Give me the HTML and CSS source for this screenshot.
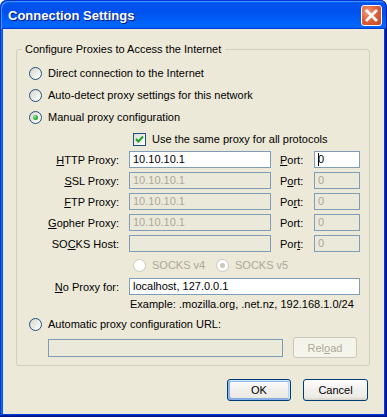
FILE: index.html
```html
<!DOCTYPE html>
<html>
<head>
<meta charset="utf-8">
<link rel="stylesheet" href="styles.css">
</head>
<body>
<div class="window">
  <div class="titlebar">
    <span class="title">Connection Settings</span>
    <span class="close"><svg width="19" height="19" viewBox="0 0 19 19"><path d="M5 5 L14 14 M14 5 L5 14" stroke="#fff" stroke-width="2.8" stroke-linecap="square"/></svg></span>
  </div>
  <div class="frame">
    <fieldset class="group">
      <legend>Configure Proxies to Access the Internet</legend>
      <div class="row radio-row"><span class="radio"></span>Direct connection to the Internet</div>
      <div class="row radio-row"><span class="radio"></span>Auto-detect proxy settings for this network</div>
      <div class="row radio-row"><span class="radio checked"></span>Manual proxy configuration</div>
      <div class="row check-row"><span class="check"><svg width="11" height="11" viewBox="0 0 11 11"><path d="M2 5 L4.3 7.5 L9 2.5" fill="none" stroke="#21a121" stroke-width="2"/></svg></span>Use the same proxy for all protocols</div>
      <div class="proxy-grid">
        <span class="lbl"><u>H</u>TTP Proxy:</span><span class="tb">10.10.10.1</span><span class="plbl"><u>P</u>ort:</span><span class="tb"><span class="caret"></span>0</span>
        <span class="lbl"><u>S</u>SL Proxy:</span><span class="tb off">10.10.10.1</span><span class="plbl">P<u>o</u>rt:</span><span class="tb off">0</span>
        <span class="lbl"><u>F</u>TP Proxy:</span><span class="tb off">10.10.10.1</span><span class="plbl">Po<u>r</u>t:</span><span class="tb off">0</span>
        <span class="lbl"><u>G</u>opher Proxy:</span><span class="tb off">10.10.10.1</span><span class="plbl">Port:</span><span class="tb off">0</span>
        <span class="lbl">SO<u>C</u>KS Host:</span><span class="tb off"></span><span class="plbl">Por<u>t</u>:</span><span class="tb off">0</span>
      </div>
      <div class="row socks-row">
        <span class="opt"><span class="radio dis"></span>SOCKS v4</span>
        <span class="opt"><span class="radio dis checked"></span>SOCKS v5</span>
      </div>
      <div class="noproxy-row">
        <span class="lbl"><u>N</u>o Proxy for:</span><span class="tb">localhost, 127.0.0.1</span>
      </div>
      <div class="example">Example: .mozilla.org, .net.nz, 192.168.1.0/24</div>
      <div class="row radio-row"><span class="radio"></span>Automatic proxy configuration URL:</div>
      <div class="url-row">
        <span class="tb off url"></span>
        <span class="btn disabled reload">Rel<u>o</u>ad</span>
      </div>
    </fieldset>
    <div class="buttons">
      <span class="btn default ok">OK</span>
      <span class="btn cancel">Cancel</span>
    </div>
  </div>
</div>
</body>
</html>
```
FILE: styles.css
```css
html, body {
  margin: 0;
  padding: 0;
  background: #ffffff;
}
body {
  font-family: "Liberation Sans", Arial, sans-serif;
  font-size: 11px;
  color: #000;
}
.window {
  width: 387px;
  height: 417px;
  display: flex;
  flex-direction: column;
}
.titlebar {
  box-sizing: border-box;
  height: 29px;
  flex: none;
  display: flex;
  justify-content: space-between;
  align-items: flex-start;
  padding: 5px 5px 0 8px;
  border-radius: 7px 7px 0 0;
  background: linear-gradient(180deg, #0997ff 0, #0053ee 10%, #0050ee 40%, #0066ff 86%, #0066ff 92%, #005bff 95%, #003dd7 97%, #003dd7 100%);
  box-shadow: inset 1px 1px #0831d9, inset -1px 0 #001ea0, inset 2px 2px #3d95ff;
}
.title {
  font-family: "Liberation Sans", Arial, sans-serif;
  font-weight: bold;
  font-size: 13px;
  line-height: 21px;
  color: #fff;
  text-shadow: 1px 1px #0a1883;
}
.close {
  box-sizing: border-box;
  width: 21px;
  height: 21px;
  border: 1px solid #fff;
  border-radius: 3px;
  background: radial-gradient(circle at 30% 30%, #f19a7c 0, #e1613c 45%, #c9431f 100%);
  display: flex;
  align-items: center;
  justify-content: center;
}
.close svg { display: block; }
.frame {
  flex: 1;
  background: #ece9d8;
  padding: 0 3px 3px;
  box-shadow: inset -1px -1px #00138c, inset 1px 0 #0831d9, inset -2px -2px #001ea0, inset 2px 0 #166aee, inset -3px -3px #003bda, inset 3px 0 #0855dd;
  display: flex;
  flex-direction: column;
}
.group {
  margin: 14px 14px 0 13px;
  padding: 6px 0 7px;
  border: 1px solid #d0d0bf;
  border-radius: 3px;
  min-width: 0;
}
.group legend {
  margin-left: 5px;
  padding: 0 4px 0 3px;
  line-height: 13px;
}
.row {
  display: flex;
  align-items: center;
  height: 22px;
}
.radio-row { padding-left: 12px; }
.radio {
  box-sizing: border-box;
  width: 13px;
  height: 13px;
  flex: none;
  border: 1px solid #1c5180;
  border-radius: 50%;
  background: linear-gradient(135deg, #d6d6ce 0, #f4f4f0 70%, #ffffff 100%);
  margin-right: 6px;
  display: flex;
  align-items: center;
  justify-content: center;
}
.radio.checked::after {
  content: "";
  width: 5px;
  height: 5px;
  border-radius: 50%;
  background: radial-gradient(circle at 35% 35%, #8ee58c 0, #33b131 55%, #1d8f1d 100%);
}
.radio.dis {
  border-color: #cac8bb;
  background: #ffffff;
}
.radio.dis.checked::after { background: #cac8bb; }
.check-row { padding-left: 116px; }
.check {
  box-sizing: border-box;
  width: 13px;
  height: 13px;
  flex: none;
  border: 1px solid #1c5180;
  background: linear-gradient(135deg, #dcdcd7 0, #ffffff 100%);
  margin-right: 6px;
  display: flex;
  align-items: center;
  justify-content: center;
}
.check svg { display: block; }
.proxy-grid {
  margin-top: 1px;
  display: grid;
  grid-template-columns: 112px 142px 43px 46px;
  grid-auto-rows: 17px;
  row-gap: 4px;
  align-items: center;
}
.lbl {
  text-align: right;
  padding-right: 10px;
}
.plbl { padding-left: 9px; }
.tb {
  box-sizing: border-box;
  height: 17px;
  border: 1px solid #7f9db9;
  background: #fff;
  padding: 0 3px;
  line-height: 15px;
  white-space: nowrap;
  overflow: hidden;
}
.tb.off {
  background: #ebe9d9;
  color: #aca899;
}
.caret {
  display: inline-block;
  width: 1px;
  height: 13px;
  background: #000;
  vertical-align: -3px;
  margin-right: -1px;
}
.socks-row {
  margin-top: 2px;
  padding-left: 116px;
  color: #aca899;
}
.opt {
  display: flex;
  align-items: center;
}
.opt:first-child { width: 83px; }
.noproxy-row {
  margin-top: 2px;
  display: grid;
  grid-template-columns: 112px 231px;
  align-items: center;
}
.example {
  padding-left: 113px;
  line-height: 18px;
}
.url-row {
  margin-top: 2px;
  padding-left: 31px;
  display: flex;
  align-items: center;
  gap: 10px;
}
.tb.url {
  width: 235px;
  height: 18px;
}
.btn {
  box-sizing: border-box;
  height: 22px;
  border: 1px solid #003c74;
  border-radius: 3px;
  background: linear-gradient(180deg, #ffffff 0, #f3f2ee 40%, #ecebe6 85%, #d6d0c5 100%);
  display: flex;
  align-items: center;
  justify-content: center;
  flex: none;
}
.btn.default {
  box-shadow: inset -1px 1px #cee7ff, inset 1px 2px #98b8ea, inset -2px 2px #bcd4f6, inset 1px -1px #89ade4, inset 2px -2px #89ade4;
}
.btn.disabled {
  border-color: #c9c7ba;
  background: #f5f4ea;
  color: #aca899;
}
.reload {
  width: 64px;
  height: 21px;
}
.buttons {
  margin: 13px 16px 0 0;
  display: flex;
  justify-content: flex-end;
  gap: 12px;
}
.ok { width: 64px; }
.cancel { width: 65px; }
```
